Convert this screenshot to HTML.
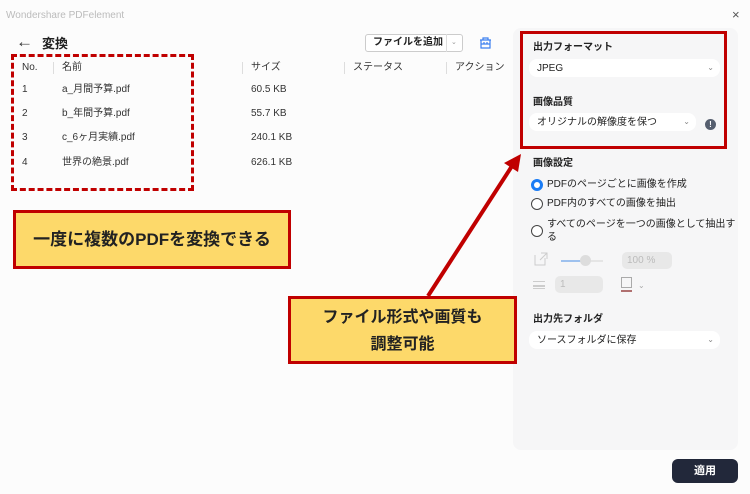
<!DOCTYPE html>
<html><head><meta charset="utf-8"><style>
*{margin:0;padding:0;box-sizing:border-box}
body{width:750px;height:494px;background:#fcfcfc;font-family:"Liberation Sans","Noto Sans CJK JP",sans-serif;color:#222;position:relative;overflow:hidden;font-size:10px}
.a{position:absolute;white-space:nowrap;line-height:14px}
.hdr{color:#333;font-size:10px}
.sep{position:absolute;width:1px;height:12px;background:#ddd;top:62px}
.row{font-size:10px;color:#333}
.panel{position:absolute;left:513px;top:28px;width:225px;height:422px;background:#f6f6f7;border-radius:8px}
.lbl{font-weight:bold;font-size:10px;color:#222}
.sel{position:absolute;background:#fff;border-radius:8px;height:18px;font-size:10px;padding:3px 0 0 8px;color:#222;line-height:13px}
.chev{position:absolute;right:6px;top:2px;color:#888;font-size:8px}
.radio{position:absolute;width:12px;height:12px;border:1.5px solid #444;border-radius:50%;background:#fff}
.callout{position:absolute;background:#fdd96a;border:3px solid #c00000;font-weight:bold;font-size:17px;color:#222;text-align:center}
</style></head><body>
<div class="a" style="left:6px;top:9px;color:#bbb;font-size:10px">Wondershare PDFelement</div>
<div class="a" style="left:732px;top:8px;color:#555;font-size:13px">×</div>
<div class="a" style="left:16px;top:35px;font-size:17px;color:#333">←</div>
<div class="a" style="left:42px;top:37px;font-size:13px;font-weight:bold;line-height:14px">変換</div>
<div class="a" style="left:365px;top:34px;width:98px;height:18px;border:1px solid #ccc;border-radius:3px;background:#fff"></div>
<div class="a" style="left:373px;top:36px;font-size:10px;font-weight:bold">ファイルを追加</div>
<div class="a" style="left:446px;top:34px;width:1px;height:18px;background:#ddd"></div>
<div class="a" style="left:451px;top:36px;color:#999;font-size:7px">⌄</div>
<svg class="a" style="left:479px;top:37px" width="13" height="12" viewBox="0 0 13 12"><path d="M1 3h11M4 3V1h5v2M2 3v8h9V3M2 7h9M5 5v2M8 5v2" fill="none" stroke="#3b7ff0" stroke-width="1.2"/></svg>
<div class="a hdr" style="left:22px;top:61px">No.</div>
<div class="sep" style="left:53px"></div>
<div class="a hdr" style="left:62px;top:61px">名前</div>
<div class="sep" style="left:242px"></div>
<div class="a hdr" style="left:251px;top:61px">サイズ</div>
<div class="sep" style="left:344px"></div>
<div class="a hdr" style="left:353px;top:61px">ステータス</div>
<div class="sep" style="left:446px"></div>
<div class="a hdr" style="left:455px;top:61px">アクション</div>
<div class="a row" style="left:22px;top:83px">1</div><div class="a row" style="left:62px;top:83px">a_月間予算.pdf</div><div class="a row" style="left:251px;top:83px">60.5 KB</div>
<div class="a row" style="left:22px;top:107px">2</div><div class="a row" style="left:62px;top:107px">b_年間予算.pdf</div><div class="a row" style="left:251px;top:107px">55.7 KB</div>
<div class="a row" style="left:22px;top:131px">3</div><div class="a row" style="left:62px;top:131px">c_6ヶ月実績.pdf</div><div class="a row" style="left:251px;top:131px">240.1 KB</div>
<div class="a row" style="left:22px;top:156px">4</div><div class="a row" style="left:62px;top:156px">世界の絶景.pdf</div><div class="a row" style="left:251px;top:156px">626.1 KB</div>
<div class="a" style="left:11px;top:54px;width:183px;height:137px;border:3px dashed #c00000"></div>

<div class="panel"></div>
<div class="a lbl" style="left:533px;top:41px">出力フォーマット</div>
<div class="sel" style="left:529px;top:59px;width:191px">JPEG<span class="chev">⌄</span></div>
<div class="a lbl" style="left:533px;top:96px">画像品質</div>
<div class="sel" style="left:529px;top:113px;width:167px">オリジナルの解像度を保つ<span class="chev">⌄</span></div>
<div class="a" style="left:705px;top:119px;width:11px;height:11px;border-radius:50%;background:#555e6e;color:#fff;font-size:8px;text-align:center;line-height:11px;font-weight:bold">!</div>
<div class="a" style="left:520px;top:31px;width:207px;height:118px;border:3px solid #c00000"></div>
<div class="a lbl" style="left:533px;top:157px">画像設定</div>
<div class="radio" style="left:531px;top:179px;border:3.5px solid #1a7cf5"></div>
<div class="a" style="left:547px;top:178px;font-size:10px">PDFのページごとに画像を作成</div>
<div class="radio" style="left:531px;top:198px"></div>
<div class="a" style="left:547px;top:197px;font-size:10px">PDF内のすべての画像を抽出</div>
<div class="radio" style="left:531px;top:225px"></div>
<div class="a" style="left:547px;top:218px;font-size:10px;line-height:13px">すべてのページを一つの画像として抽出す<br>る</div>
<svg class="a" style="left:534px;top:252px" width="14" height="14"><path d="M1 3v10h10V6M7 1h6v6M13 1L6 8" fill="none" stroke="#ccc" stroke-width="1"/></svg>
<div class="a" style="left:561px;top:260px;width:24px;height:2px;background:#9ec1ee"></div>
<div class="a" style="left:585px;top:260px;width:18px;height:2px;background:#e5e5e5"></div>
<div class="a" style="left:580px;top:255px;width:11px;height:11px;border-radius:50%;background:#ddd"></div>
<div class="a" style="left:622px;top:252px;width:50px;height:17px;background:#e8e8e8;border-radius:5px;color:#bbb;padding:2px 5px;font-size:10px">100 %</div>
<div class="a" style="left:533px;top:281px;width:12px;height:8px;border-top:1.5px solid #ccc;border-bottom:1.5px solid #ccc"></div>
<div class="a" style="left:533px;top:285px;width:12px;height:1.5px;background:#ccc"></div>
<div class="a" style="left:555px;top:276px;width:48px;height:17px;background:#e8e8e8;border-radius:5px;color:#bbb;padding:2px 5px;font-size:10px">1</div>
<div class="a" style="left:621px;top:277px;width:11px;height:11px;border:1px solid #aaa"></div>
<div class="a" style="left:621px;top:290px;width:11px;height:2px;background:#b07070"></div>
<div class="a" style="left:638px;top:279px;color:#aaa;font-size:8px">⌄</div>
<div class="a lbl" style="left:533px;top:313px">出力先フォルダ</div>
<div class="sel" style="left:529px;top:331px;width:191px">ソースフォルダに保存<span class="chev">⌄</span></div>
<div class="a" style="left:672px;top:459px;width:66px;height:24px;background:#22283a;border-radius:6px;color:#fff;font-weight:bold;font-size:11px;text-align:center;line-height:24px">適用</div>

<svg class="a" style="left:0;top:0" width="750" height="494"><line x1="428" y1="296" x2="512" y2="166" stroke="#c00000" stroke-width="4"/><polygon points="521,154 504,163 518,172" fill="#c00000"/></svg>
<div class="callout" style="left:13px;top:210px;width:278px;height:59px;line-height:53px">一度に複数のPDFを変換できる</div>
<div class="callout" style="left:288px;top:296px;width:229px;height:68px;line-height:27px;padding-top:5px;font-size:16px">ファイル形式や画質も<br>調整可能</div>
</body></html>
